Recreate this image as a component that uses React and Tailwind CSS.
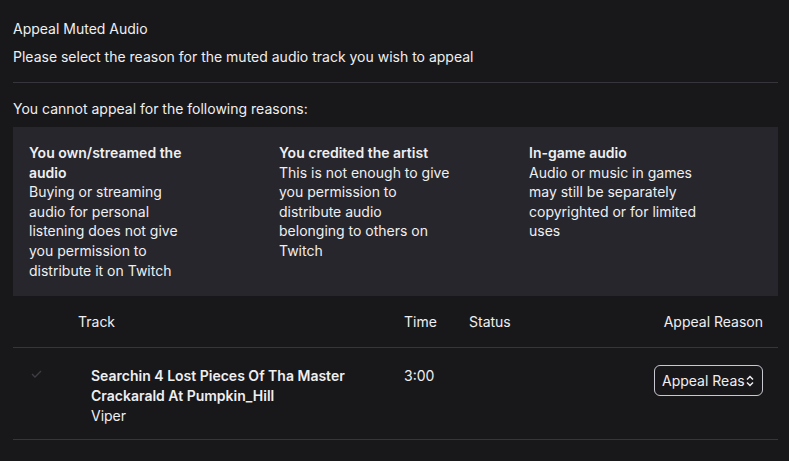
import React from "react";

const reasons = [
  {
    title: "You own/streamed the audio",
    body: "Buying or streaming audio for personal listening does not give you permission to distribute it on Twitch",
  },
  {
    title: "You credited the artist",
    body: "This is not enough to give you permission to distribute audio belonging to others on Twitch",
  },
  {
    title: "In-game audio",
    body: "Audio or music in games may still be separately copyrighted or for limited uses",
  },
];

export default function App() {
  return (
    <div className="min-h-screen bg-[#18181b] text-[#efeff1] pl-[13px] pr-[11px] pt-[19px] font-['Inter',_sans-serif] text-[14px] leading-[19.6px]">
      <p className="leading-5">Appeal Muted Audio</p>
      <p className="mt-2 leading-5">Please select the reason for the muted audio track you wish to appeal</p>
      <div className="mt-[15px] border-t border-[#35353b]" />
      <p className="mt-[16px] leading-5">You cannot appeal for the following reasons:</p>
      <div className="mt-2 bg-[#26262c] px-4 py-4 grid grid-cols-[250px_250px_1fr]">
        {reasons.map((r) => (
          <div key={r.title} className="max-w-[172px]">
            <p className="font-semibold">{r.title}</p>
            <p>{r.body}</p>
          </div>
        ))}
      </div>
      <div className="grid grid-cols-[65px_326px_65px_1fr] h-[52px] items-center border-b border-[#35353b]">
        <div />
        <div>Track</div>
        <div>Time</div>
        <div className="flex justify-between pr-[15px]">
          <span>Status</span>
          <span>Appeal Reason</span>
        </div>
      </div>
      <div className="grid grid-cols-[65px_326px_65px_1fr] pt-[18px] pb-[13px] border-b border-[#35353b]">
        <div className="pl-[18px] pt-[4px]">
          <svg width="11" height="8" viewBox="0 0 11 8" fill="none">
            <path d="M1 4 L4 7 L10 1" stroke="#3e3e44" strokeWidth="1.3" />
          </svg>
        </div>
        <div className="pl-[13px]">
          <p className="font-semibold leading-5">Searchin 4 Lost Pieces Of Tha Master Crackarald At Pumpkin_Hill</p>
          <p>Viper</p>
        </div>
        <div className="leading-5">3:00</div>
        <div className="flex justify-end pr-[15px]">
          <div className="-mt-[1px] w-[109px] h-[31px] rounded-[6px] border border-[#c8c8d0] flex items-center pl-[7px] pr-[8px]">
            <span className="flex-1 overflow-hidden whitespace-nowrap leading-5">Appeal Reason</span>
            <svg width="8" height="12" viewBox="0 0 8 12" fill="none" className="ml-[1px]">
              <path d="M1 4.5 L4 1.5 L7 4.5" stroke="#efeff1" strokeWidth="1.5" />
              <path d="M1 7.5 L4 10.5 L7 7.5" stroke="#efeff1" strokeWidth="1.5" />
            </svg>
          </div>
        </div>
      </div>
    </div>
  );
}
